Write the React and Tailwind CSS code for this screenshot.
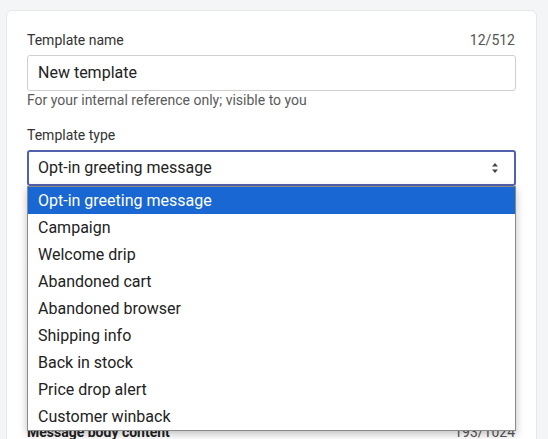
import { useState } from 'react';

const TYPES = [
    'Opt-in greeting message',
    'Campaign',
    'Welcome drip',
    'Abandoned cart',
    'Abandoned browser',
    'Shipping info',
    'Back in stock',
    'Price drop alert',
    'Customer winback',
];

function SortArrows() {
    return (
        <svg width="8" height="12" viewBox="0 0 8 12" className="text-[#444]">
            <path d="M4 1 L7 4.5 L1 4.5 Z" fill="currentColor" />
            <path d="M4 11 L7 7.5 L1 7.5 Z" fill="currentColor" />
        </svg>
    );
}

export default function App() {
    const [name] = useState('New template');
    const [type] = useState(TYPES[0]);

    return (
        <div className="min-h-screen bg-[#f4f5f6] pl-[6px] pt-[10px] font-['Roboto','Liberation_Sans',sans-serif] overflow-hidden h-[439px]">
            <div className="w-[531px] bg-white border border-[#e6e7e9] rounded-md px-5 pt-[19px] pb-8">
                {/* template name */}
                <div className="flex items-center justify-between text-sm leading-5 mb-[5px]">
                    <label className="text-[#333]">Template name</label>
                    <span className="text-[#555] pr-[1px]">{name.length}/512</span>
                </div>
                <div className="h-9 border border-[#cfcfcf] rounded-[3px] flex items-center px-[10px] text-base text-[#222]">
                    {name}
                </div>
                <p className="text-sm leading-[18px] text-[#5a5a5a]">For your internal reference only; visible to you</p>

                {/* template type */}
                <div className="mt-4 text-sm leading-5 text-[#333] mb-[5px]">Template type</div>
                <div className="relative">
                    <div className="h-9 border-2 border-[#5361ad] rounded-[3px] flex items-center justify-between pl-[9px] pr-[15px] text-base text-[#222]">
                        <span>{type}</span>
                        <SortArrows />
                    </div>
                    <ul className="absolute left-0 right-0 top-[36px] z-10 bg-white border border-[#8a8a8a] shadow-[0_3px_8px_rgba(0,0,0,0.25)]">
                        {TYPES.map(t => (
                            <li key={t} className={`h-[27px] flex items-center pl-[10px] text-base ${t === type ? 'bg-[#1967d2] text-white' : 'text-[#222]'}`}>
                                {t}
                            </li>
                        ))}
                    </ul>
                </div>

                {/* fields hidden behind the open list */}
                <div className="mt-[38px] h-[198px]" />

                <div className="flex items-center justify-between text-sm leading-5">
                    <label className="font-bold text-[#222]">Message body content</label>
                    <span className="text-[#555] pr-[1px]">193/1024</span>
                </div>
            </div>
        </div>
    );
}
